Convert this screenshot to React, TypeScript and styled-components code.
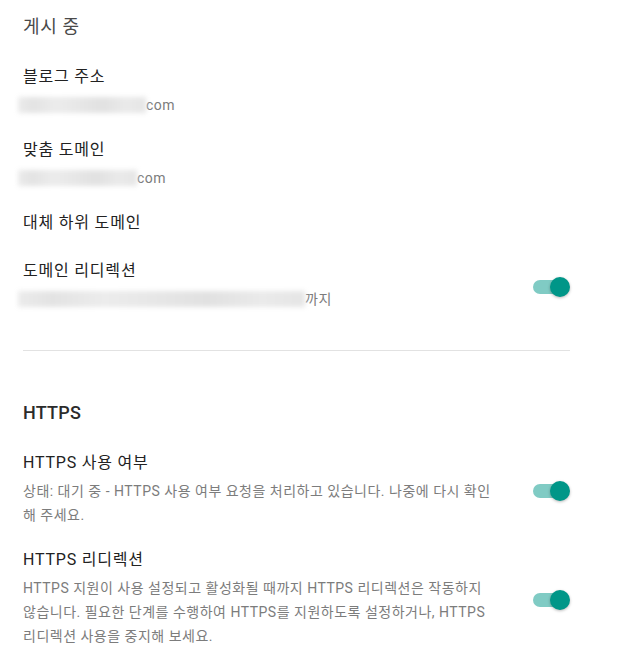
import React from "react";
import styled, { createGlobalStyle } from "styled-components";

const GlobalStyle = createGlobalStyle`
  html, body {
    margin: 0;
    padding: 0;
    background: #ffffff;
  }
  body {
    font-family: Roboto, "Noto Sans CJK KR", "Noto Sans", sans-serif;
    -webkit-font-smoothing: antialiased;
  }
`;

const Page = styled.div`
  width: 547px;
  padding: 13px 0 20px 23px;
  display: flex;
  flex-direction: column;
`;

const Section = styled.section`
  display: flex;
  flex-direction: column;
`;

const SectionTitle = styled.h2<{ $strong?: boolean }>`
  margin: 0 0 24px 0;
  font-size: 18px;
  line-height: 28px;
  letter-spacing: ${(p) => (p.$strong ? "0.2px" : "0.6px")};
  font-weight: ${(p) => (p.$strong ? 500 : 400)};
  color: ${(p) => (p.$strong ? "#2b2b2b" : "#4a4a4a")};
`;

const List = styled.div`
  display: flex;
  flex-direction: column;
  gap: 21px;
`;

const Item = styled.div<{ $extra?: number }>`
  display: flex;
  align-items: center;
  justify-content: space-between;
  padding-bottom: ${(p) => p.$extra ?? 0}px;
`;

const TextCol = styled.div`
  display: flex;
  flex-direction: column;
  gap: 4px;
  max-width: 490px;
`;

const Label = styled.div`
  font-size: 16px;
  line-height: 24px;
  letter-spacing: 0.8px;
  color: #222222;
`;

const Sub = styled.div`
  font-size: 14px;
  line-height: 24px;
  letter-spacing: 0.5px;
  color: #7c7c7c;
  word-break: keep-all;
  white-space: nowrap;
`;

const Blur = styled.span<{ $w: number }>`
  display: inline-block;
  vertical-align: middle;
  height: 16px;
  margin: -3px 0 0 -5px;
  width: ${(p) => p.$w}px;
  background: linear-gradient(
    90deg,
    #ebebeb 0%,
    #e3e3e3 12%,
    #ececec 30%,
    #e6e6e6 50%,
    #e1e1e1 66%,
    #eaeaea 85%,
    #e5e5e5 100%
  );
  filter: blur(2.5px);
`;

const Divider = styled.hr`
  margin: 39px 0 48px 0;
  border: 0;
  border-top: 1px solid #e2e2e2;
  width: 100%;
`;

const SwitchBox = styled.div`
  position: relative;
  flex: 0 0 auto;
  width: 37px;
  height: 20px;
  margin-top: 4px;
`;

const Track = styled.span`
  position: absolute;
  left: 0;
  top: 3px;
  width: 34px;
  height: 14px;
  border-radius: 7px;
  background: #80cbc4;
`;

const Thumb = styled.span`
  position: absolute;
  right: 0;
  top: 0;
  width: 20px;
  height: 20px;
  border-radius: 50%;
  background: #009688;
  box-shadow: 0 1px 3px rgba(0, 0, 0, 0.28);
`;

const Switch = () => (
  <SwitchBox role="switch" aria-checked="true">
    <Track />
    <Thumb />
  </SwitchBox>
);

export default function App() {
  return (
    <>
      <GlobalStyle />
      <Page>
        <Section>
          <SectionTitle>게시 중</SectionTitle>
          <List>
            <Item>
              <TextCol>
                <Label>블로그 주소</Label>
                <Sub>
                  <Blur $w={128} />
                  com
                </Sub>
              </TextCol>
            </Item>
            <Item>
              <TextCol>
                <Label>맞춤 도메인</Label>
                <Sub>
                  <Blur $w={119} />
                  com
                </Sub>
              </TextCol>
            </Item>
            <Item $extra={3}>
              <TextCol>
                <Label>대체 하위 도메인</Label>
              </TextCol>
            </Item>
            <Item>
              <TextCol>
                <Label>도메인 리디렉션</Label>
                <Sub>
                  <Blur $w={287} />
                  까지
                </Sub>
              </TextCol>
              <Switch />
            </Item>
          </List>
        </Section>
        <Divider />
        <Section>
          <SectionTitle $strong>HTTPS</SectionTitle>
          <List>
            <Item>
              <TextCol>
                <Label>HTTPS 사용 여부</Label>
                <Sub>
                  상태: 대기 중 - HTTPS 사용 여부 요청을 처리하고 있습니다. 나중에 다시 확인
                  <br />해 주세요.
                </Sub>
              </TextCol>
              <Switch />
            </Item>
            <Item>
              <TextCol>
                <Label>HTTPS 리디렉션</Label>
                <Sub>
                  HTTPS 지원이 사용 설정되고 활성화될 때까지 HTTPS 리디렉션은 작동하지
                  <br />
                  않습니다. 필요한 단계를 수행하여 HTTPS를 지원하도록 설정하거나, HTTPS
                  <br />
                  리디렉션 사용을 중지해 보세요.
                </Sub>
              </TextCol>
              <Switch />
            </Item>
          </List>
        </Section>
      </Page>
    </>
  );
}
